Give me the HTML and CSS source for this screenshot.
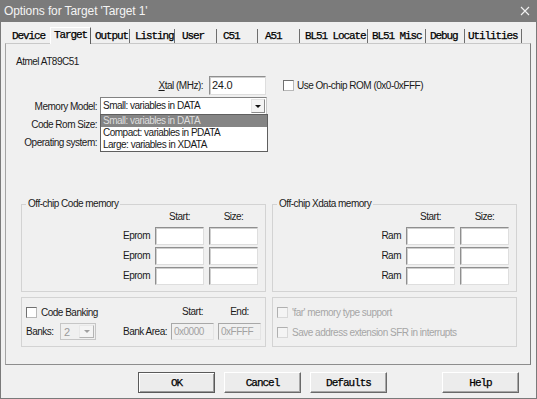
FILE: index.html
```html
<!DOCTYPE html>
<html>
<head>
<meta charset="utf-8">
<title>Options for Target</title>
<link rel="stylesheet" href="styles.css">
</head>
<body>
<div class="window">
  <div class="titlebar">
    <span class="title">Options for Target 'Target 1'</span>
    <svg class="close" width="10" height="10" viewBox="0 0 10 10"><path d="M1 1L9 9M9 1L1 9" stroke="#f2f2f2" stroke-width="1.1" fill="none"/></svg>
  </div>
  <div class="tabs">
    <div class="tab prev">Device</div>
    <div class="tab sel">Target</div>
    <div class="tab">Output</div>
    <div class="tab">Listing</div>
    <div class="tab">User</div>
    <div class="tab">C51</div>
    <div class="tab">A51</div>
    <div class="tab">BL51 Locate</div>
    <div class="tab">BL51 Misc</div>
    <div class="tab">Debug</div>
    <div class="tab">Utilities</div>
  </div>
  <div class="panel">
    <div class="device">Atmel AT89C51</div>
    <div class="row row-xtal">
      <span class="xtal-label"><u>X</u>tal (MHz):</span>
      <span class="input xtal-input">24.0</span>
      <span class="check"></span>
      <span class="check-text">Use On-chip ROM (0x0-0xFFF)</span>
    </div>
    <div class="row row-sel">
      <span class="lbl">Memory Model:</span>
      <div class="select">
        <span class="sel-text">Small: variables in DATA</span>
        <span class="drop-btn"><i class="tri"></i></span>
        <div class="list">
          <div class="opt hl">Small: variables in DATA</div>
          <div class="opt">Compact: variables in PDATA</div>
          <div class="opt">Large: variables in XDATA</div>
        </div>
      </div>
    </div>
    <div class="row row-sel"><span class="lbl">Code Rom Size:</span></div>
    <div class="row row-sel"><span class="lbl">Operating system:</span></div>

    <div class="groups">
      <div class="group g-mem">
        <div class="legend">Off-chip Code memory</div>
        <div class="mem-grid">
          <span></span><span class="hdr">Start:</span><span class="hdr">Size:</span>
          <span class="rl">Eprom</span><span class="input"></span><span class="input"></span>
          <span class="rl">Eprom</span><span class="input"></span><span class="input"></span>
          <span class="rl">Eprom</span><span class="input"></span><span class="input"></span>
        </div>
      </div>
      <div class="group g-mem">
        <div class="legend">Off-chip Xdata memory</div>
        <div class="mem-grid">
          <span></span><span class="hdr">Start:</span><span class="hdr">Size:</span>
          <span class="rl">Ram</span><span class="input"></span><span class="input"></span>
          <span class="rl">Ram</span><span class="input"></span><span class="input"></span>
          <span class="rl">Ram</span><span class="input"></span><span class="input"></span>
        </div>
      </div>
      <div class="group g-low">
        <div class="bank-grid">
          <div class="cb-row span3"><span class="check"></span><span>Code Banking</span></div>
          <span class="hdr">Start:</span>
          <span class="hdr">End:</span>
          <span class="banks-lbl">Banks:</span>
          <div class="mini-select"><span class="ms-text">2</span><span class="drop-btn dis"><i class="tri"></i></span></div>
          <span class="area-lbl">Bank Area:</span>
          <span class="input dis">0x0000</span>
          <span class="input dis">0xFFFF</span>
        </div>
      </div>
      <div class="group g-low g-right">
        <div class="cb-row disabled"><span class="check dis"></span><span>'far' memory type support</span></div>
        <div class="cb-row disabled second"><span class="check dis"></span><span>Save address extension SFR in interrupts</span></div>
      </div>
    </div>
  </div>
  <div class="buttons">
    <button class="btn default">OK</button>
    <button class="btn">Cancel</button>
    <button class="btn">Defaults</button>
    <button class="btn help">Help</button>
  </div>
</div>
</body>
</html>
```

FILE: styles.css
```css
* { box-sizing: border-box; }
html, body { margin: 0; padding: 0; }
body {
  width: 537px;
  height: 399px;
  overflow: hidden;
  background: #f0f0f0;
  font-family: "Liberation Sans", Arial, sans-serif;
  font-size: 10px;
  letter-spacing: -0.5px;
  color: #1a1a1a;
}
.window {
  width: 537px;
  height: 399px;
  border: 1px solid #7a7a7a;
  border-top: none;
  background: #f0f0f0;
  display: flex;
  flex-direction: column;
}
.titlebar {
  height: 22px;
  flex: none;
  background: #7b7b7b;
  color: #f4f4f4;
  display: flex;
  align-items: center;
  justify-content: space-between;
  padding: 0 7px 0 4px;
  margin: 0 -1px;
  font-size: 12px;
  letter-spacing: -0.1px;
}
.close { display: block; }

.tabs {
  height: 21px;
  flex: none;
  display: flex;
  align-items: flex-end;
  padding-left: 7px;
  font-family: "Liberation Mono", "Courier New", monospace;
  font-size: 11px;
  letter-spacing: -1.1px;
  color: #000;
  -webkit-text-stroke: 0.25px #000;
}
.tab {
  height: 14px;
  line-height: 14px;
  padding-left: 4px;
  border-right: 1px solid #6e6e6e;
  white-space: nowrap;
}
.tab.prev { border-right: none; }
.tab.sel {
  height: 17px;
  line-height: 14px;
  margin-bottom: -1px;
  padding-left: 3px;
  border-top: 1px solid #ffffff;
  border-left: 1px solid #ffffff;
  border-right: 1px solid #5e5e5e;
  background: #f0f0f0;
  position: relative;
  z-index: 1;
}
.tab:nth-child(1) { width: 42px; }
.tab:nth-child(2) { width: 41px; }
.tab:nth-child(3) { width: 39px; }
.tab:nth-child(4) { width: 45px; padding-left: 5px; }
.tab:nth-child(5) { width: 42px; padding-left: 7px; }
.tab:nth-child(6) { width: 41px; padding-left: 6px; }
.tab:nth-child(7) { width: 42px; padding-left: 7px; }
.tab:nth-child(8) { width: 68px; padding-left: 5px; }
.tab:nth-child(9) { width: 58px; }
.tab:nth-child(10) { width: 39px; }
.tab:nth-child(11) { width: 57px; padding-left: 3px; }

.panel {
  flex: none;
  margin-left: 4px;
  width: 526px;
  height: 322px;
  border: 1px solid #a3a3a3;
  border-top-color: #c9c9c9;
  border-right-color: #7d7d7d;
  border-bottom-color: #8d8d8d;
}
.device {
  margin: 12px 0 0 10px;
  height: 12px;
  line-height: 12px;
}
.row {
  display: flex;
  align-items: center;
}
.row-xtal {
  margin-top: 8px;
  height: 19px;
}
.xtal-label {
  width: 197px;
  text-align: right;
  margin-right: 6px;
}
.input {
  display: block;
  height: 18px;
  background: #ffffff;
  border: 1px solid;
  border-color: #8f8f8f #dedede #dedede #8f8f8f;
  box-shadow: inset 1px 1px 0 #cfcfcf;
  line-height: 16px;
  padding-left: 2px;
  overflow: hidden;
  white-space: nowrap;
}
.xtal-input {
  width: 57px;
  height: 19px;
  font-size: 11px;
  letter-spacing: -0.3px;
  line-height: 17px;
}
.check {
  display: block;
  width: 11px;
  height: 11px;
  flex: none;
  background: #ffffff;
  border: 1px solid;
  border-color: #707070 #b8b8b8 #b8b8b8 #707070;
}
.row-xtal .check { margin-left: 17px; margin-right: 3px; }

.row-sel {
  height: 18px;
}
.row-xtal + .row-sel { margin-top: 2px; }
.lbl {
  width: 91px;
  text-align: right;
  margin-right: 3px;
  white-space: nowrap;
}
.select {
  position: relative;
  width: 167px;
  height: 18px;
  background: #ffffff;
  border: 1px solid;
  border-color: #828282 #c8c8c8 #c8c8c8 #828282;
  display: flex;
  align-items: center;
  justify-content: space-between;
  padding-left: 2px;
  padding-right: 1px;
}
.sel-text { line-height: 14px; }
.drop-btn {
  width: 14px;
  height: 14px;
  background: #f4f4f4;
  border: 1px solid;
  border-color: #e4e4e4 #8a8a8a #8a8a8a #e4e4e4;
  display: flex;
  align-items: center;
  justify-content: center;
}
.tri {
  display: block;
  width: 0;
  height: 0;
  border-left: 3px solid transparent;
  border-right: 3px solid transparent;
  border-top: 3px solid #111;
}
.list {
  position: absolute;
  left: -1px;
  top: 16px;
  width: 168px;
  background: #ffffff;
  border: 1px solid #5f5f5f;
  z-index: 2;
}
.opt {
  height: 12px;
  line-height: 12px;
  padding-left: 2px;
  white-space: nowrap;
}
.opt.hl {
  background: #858585;
  color: #dedede;
}

.groups {
  margin-top: 53px;
  margin-left: 15px;
  display: grid;
  grid-template-columns: 245px 245px;
  column-gap: 6px;
  row-gap: 5px;
}
.group {
  border: 1px solid #d3d3d3;
}
.g-mem { height: 88px; }
.legend {
  display: table;
  margin: -7px 0 0 4px;
  padding: 0 2px;
  height: 12px;
  line-height: 12px;
  background: #f0f0f0;
}
.mem-grid {
  margin-top: 1px;
  display: grid;
  grid-template-columns: 1fr 49px 49px;
  grid-template-rows: 14px 18px 18px 18px;
  column-gap: 5px;
  row-gap: 2px;
  padding-right: 7px;
}
.hdr {
  text-align: center;
  line-height: 12px;
  height: 12px;
}
.rl {
  text-align: right;
  line-height: 18px;
}
.g-low {
  height: 50px;
  padding: 7px 4px 0 4px;
}
.bank-grid {
  display: grid;
  grid-template-columns: 30px 36px 1fr 43px 43px;
  grid-template-rows: 14px 17px;
  column-gap: 4px;
  row-gap: 4px;
  align-items: center;
}
.span3 { grid-column: 1 / span 3; }
.cb-row {
  display: flex;
  align-items: center;
  height: 14px;
}
.cb-row .check { margin-right: 4px; }
.bank-grid .hdr { line-height: 14px; height: 14px; }
.banks-lbl { white-space: nowrap; }
.mini-select {
  height: 17px;
  width: 36px;
  display: flex;
  align-items: center;
  justify-content: space-between;
  border: 1px solid #c6c6c6;
  background: #f0f0f0;
  padding: 0 1px 0 3px;
  color: #9a9a9a;
  font-size: 11px;
}
.drop-btn.dis {
  width: 15px;
  height: 13px;
  border-color: #e8e8e8 #b4b4b4 #b4b4b4 #e8e8e8;
}
.drop-btn.dis .tri { border-top-color: #a0a0a0; }
.area-lbl {
  text-align: right;
  white-space: nowrap;
}
.input.dis {
  height: 17px;
  background: #f0f0f0;
  color: #a2a2a2;
  border-color: #a8a8a8 #e4e4e4 #e4e4e4 #a8a8a8;
  box-shadow: none;
  line-height: 15px;
  font-size: 10px;
}
.g-right { padding-left: 4px; }
.cb-row.disabled { color: #a6a6a6; }
.cb-row.second { margin-top: 6px; }
.check.dis {
  background: #f4f4f4;
  border-color: #b0b0b0 #d8d8d8 #d8d8d8 #b0b0b0;
}

.buttons {
  flex: none;
  display: flex;
  gap: 9px;
  padding-left: 137px;
  margin-top: 7px;
}
.btn {
  width: 77px;
  height: 21px;
  margin: 0;
  padding: 0;
  background: #ececec;
  border: 1px solid;
  border-color: #ffffff #6a6a6a #6a6a6a #ffffff;
  box-shadow: inset -1px -1px 0 #a8a8a8;
  font-family: "Liberation Mono", "Courier New", monospace;
  font-size: 11px;
  letter-spacing: -1px;
  color: #000;
  -webkit-text-stroke: 0.25px #000;
}
.btn.default {
  border-color: #5a5a5a;
  box-shadow: inset 1px 1px 0 #ffffff, inset -1px -1px 0 #9a9a9a;
}
.btn.help { margin-left: 46px; }
```
